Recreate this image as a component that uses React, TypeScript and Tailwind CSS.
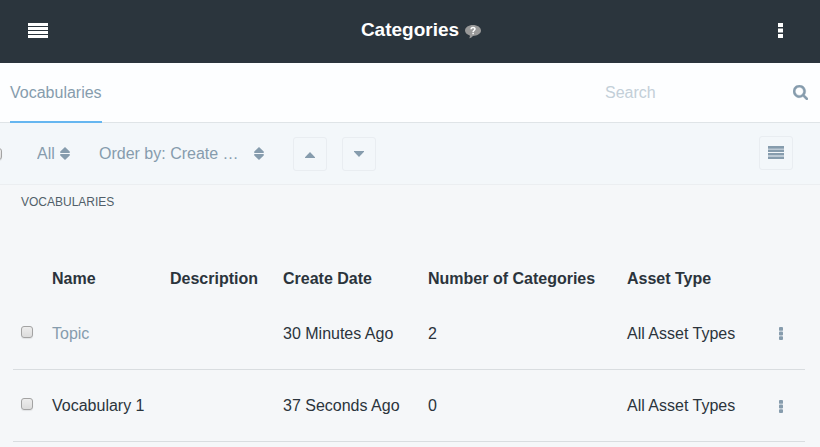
import React from "react";

type Row = { name: string; link?: boolean; created: string; count: number; asset: string };

const rows: Row[] = [
  { name: "Topic", link: true, created: "30 Minutes Ago", count: 2, asset: "All Asset Types" },
  { name: "Vocabulary 1", created: "37 Seconds Ago", count: 0, asset: "All Asset Types" },
];

const checkboxClass =
  "block size-3 shrink-0 appearance-none rounded-[3px] border border-[#a3a3a3] bg-linear-to-b from-[#ededed] to-[#dcdcdc] shadow-[0_1px_1px_#00000014]";

function SortIcon() {
  return (
    <svg className="pointer-events-none h-[13px] w-[10px] shrink-0" viewBox="0 0 10 13" fill="currentColor" aria-hidden="true">
      <path d="M5 0 9.700 4.600Q10.300 5.800 9.200 5.900H.8Q-.3 5.800.3 4.600ZM5 13 9.700 8.400Q10.300 7.200 9.200 7.100H.8Q-.3 7.200.3 8.400Z" />
    </svg>
  );
}

function RowDots() {
  return (
    <svg className="h-[13px] w-1" viewBox="0 0 4 13" fill="currentColor" aria-hidden="true">
      <rect width="4" height="3.8" rx="0.9" />
      <rect y="4.6" width="4" height="3.8" rx="0.9" />
      <rect y="9.2" width="4" height="3.8" rx="0.9" />
    </svg>
  );
}

function SquareButton({ label, children }: { label: string; children: React.ReactNode }) {
  return (
    <button
      type="button"
      aria-label={label}
      className="flex size-[34px] shrink-0 items-center justify-center rounded-[3px] border border-[#e9edf1]"
    >
      {children}
    </button>
  );
}

export default function App() {
  return (
    <div className="min-h-screen overflow-hidden bg-[#f5f7f9] font-['Liberation_Sans',Arial,sans-serif] text-base text-[#2b343c]">
      <header className="flex h-[63px] items-center justify-between bg-[#2b353d] pr-[37px] pb-[3px] pl-7 text-white">
        <button type="button" aria-label="Menu" className="flex w-5 justify-start">
          <svg className="h-[15px] w-5" viewBox="0 0 20 15" fill="currentColor" shapeRendering="crispEdges" aria-hidden="true">
            <path d="M0 0h20v3H0zM0 4h20v3H0zM0 8h20v3H0zM0 12h20v3H0z" />
          </svg>
        </button>
        <h1 className="flex items-center gap-[6px] pl-[31px] text-[19px] leading-6 font-bold">
          Categories
          <svg className="mt-1 h-[14px] w-4" viewBox="0 0 16 14" role="img" aria-label="Help">
            <path
              d="M8 0C3.600 0 0 2.400 0 5.600c0 2.200 1.800 4 4.800 4.900.4 1-.2 2-.7 2.800 1.800-.5 3-1.300 3.800-2.400C12.400 10.900 16 8.800 16 5.600 16 2.400 12.400 0 8 0Z"
              fill="#999"
            />
            <path d="M6.100 4.300C6.100 1.900 10 1.900 10 4.100 10 5.500 8.100 5.500 8.100 6.900M8.100 7.800v1.500" stroke="#fff" strokeWidth="1.500" fill="none" />
          </svg>
        </h1>
        <button type="button" aria-label="Options" className="flex w-5 justify-end">
          <svg className="h-[15px] w-[5px]" viewBox="0 0 5 15" fill="currentColor" aria-hidden="true">
            <path d="M0 0h5v4H0zM0 5.500h5v4H0zM0 11h5v4H0z" />
          </svg>
        </button>
      </header>

      <nav className="flex h-[60px] items-stretch justify-between border-b border-[#dfe4e7] bg-[#fdfeff] pr-3 pl-[10px] shadow-[0_1px_0_#eaeff2]">
        <a href="#vocabularies" className="-mb-px flex items-center border-b-2 border-[#65b6f0] pt-[2px] text-[#869cad]">
          Vocabularies
        </a>
        <form role="search" className="flex w-[203px] items-center justify-between gap-2">
          <input
            type="search"
            aria-label="Search"
            placeholder="Search"
            className="min-w-0 flex-1 bg-transparent outline-none placeholder:text-[#c3cfd8]"
          />
          <button type="button" aria-label="Submit search" className="text-[#869cad]">
            <svg className="size-[15px]" viewBox="64 128 1664 1664" fill="currentColor" stroke="currentColor" strokeWidth="40" aria-hidden="true">
              <path d="M1216 832q0-185-131.500-316.500t-316.500-131.500-316.500 131.500-131.500 316.500 131.500 316.500 316.500 131.500 316.500-131.500 131.500-316.500zm512 832q0 52-38 90t-90 38q-54 0-90-38l-343-342q-179 124-399 124-143 0-273.500-55.500t-225-150-150-225-55.500-273.500 55.500-273.500 150-225 225-150 273.500-55.500 273.500 55.500 225 150 150 225 55.500 273.500q0 220-124 399l343 343q37 37 37 90z" />
            </svg>
          </button>
        </form>
      </nav>

      <div className="flex h-[62px] items-center justify-between border-b border-[#ebeef1] bg-[#f3f7fa] pr-[27px] text-[#869cad]">
        <div className="-ml-[10px] flex items-center">
          <input type="checkbox" aria-label="Select all" className={checkboxClass} />
          <label className="ml-[35px] flex items-center">
            <select aria-label="Filter" className="w-[23px] appearance-none bg-transparent">
              <option>All</option>
            </select>
            <SortIcon />
          </label>
          <label className="ml-[29px] flex items-center">
            <select aria-label="Order by" className="w-[155px] appearance-none bg-transparent">
              <option>Order by: Create …</option>
            </select>
            <SortIcon />
          </label>
          <div className="ml-[29px] flex gap-[15px]">
            <SquareButton label="Ascending">
              <svg className="mt-[2px] h-[6px] w-[10px]" viewBox="0 0 10 6" fill="currentColor" aria-hidden="true">
                <path d="M5 0 10 5.200V6H0V5.200Z" />
              </svg>
            </SquareButton>
            <SquareButton label="Descending">
              <svg className="h-[6px] w-[10px]" viewBox="0 0 10 6" fill="currentColor" aria-hidden="true">
                <path d="M0 0h10v.8L5 6 0 .8Z" />
              </svg>
            </SquareButton>
          </div>
        </div>
        <div className="pb-[2px]">
          <SquareButton label="List view">
            <svg className="h-[13px] w-4" viewBox="0 0 16 13" fill="currentColor" aria-hidden="true">
              <path d="M0 0h16v2.700H0zM0 3.500h16v2.600H0zM0 6.900h16v2.600H0zM0 10.400h16V13H0z" />
            </svg>
          </SquareButton>
        </div>
      </div>

      <main className="pr-[15px] pl-[13px]">
        <h2 id="vocabularies" className="px-2 pt-2 text-xs leading-[18px] text-[#515f69] uppercase">
          Vocabularies
        </h2>
        <table className="mt-12 w-full table-fixed border-collapse text-left">
          <colgroup>
            <col className="w-[31px]" />
            <col className="w-[118px]" />
            <col className="w-[113px]" />
            <col className="w-[145px]" />
            <col className="w-[199px]" />
            <col />
            <col className="w-[34px]" />
          </colgroup>
          <thead>
            <tr className="h-[38px] whitespace-nowrap">
              <td />
              <th className="px-2 pt-[2px]">Name</th>
              <th className="px-2 pt-[2px]">Description</th>
              <th className="px-2 pt-[2px]">Create Date</th>
              <th className="px-2 pt-[2px]">Number of Categories</th>
              <th className="px-2 pt-[2px]">Asset Type</th>
              <td />
            </tr>
          </thead>
          <tbody>
            {rows.map((row) => (
              <tr key={row.name} className="h-[72px] border-b border-[#d9dde0] whitespace-nowrap">
                <td className="px-2 pb-[2px]">
                  <input type="checkbox" aria-label={`Select ${row.name}`} className={checkboxClass} />
                </td>
                <td className="px-2 pt-[2px]">
                  {row.link ? (
                    <a href="#topic" className="text-[#869cad]">
                      {row.name}
                    </a>
                  ) : (
                    row.name
                  )}
                </td>
                <td />
                <td className="px-2 pt-[2px]">{row.created}</td>
                <td className="px-2 pt-[2px]">{row.count}</td>
                <td className="px-2 pt-[2px]">{row.asset}</td>
                <td className="px-2 pt-[2px]">
                  <button type="button" aria-label={`Actions for ${row.name}`} className="flex text-[#869cad]">
                    <RowDots />
                  </button>
                </td>
              </tr>
            ))}
          </tbody>
        </table>
      </main>
    </div>
  );
}
